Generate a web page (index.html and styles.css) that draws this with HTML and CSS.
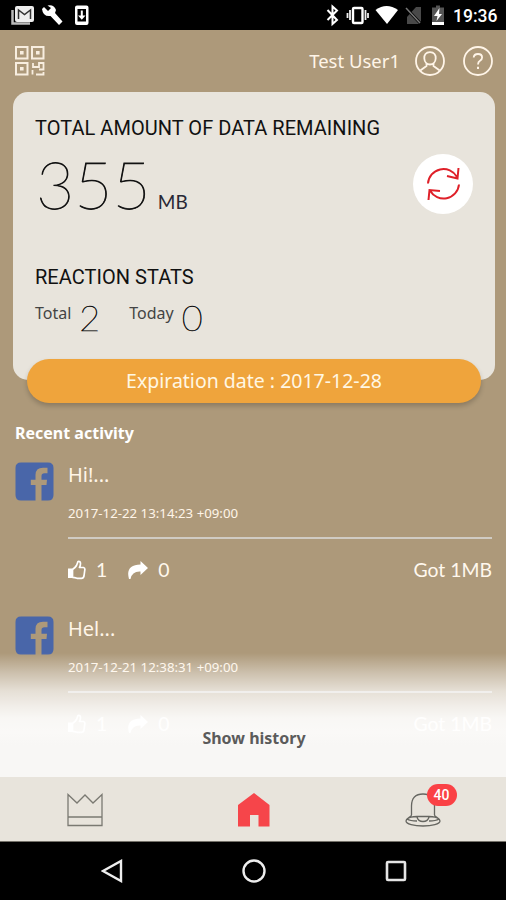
FILE: index.html
```html
<!DOCTYPE html>
<html lang="en">
<head>
<meta charset="utf-8">
<title>Data balance</title>
<link rel="stylesheet" href="styles.css">
</head>
<body>
<svg class="defs" width="0" height="0" aria-hidden="true">
  <symbol id="facebook" viewBox="0 0 39 39"><path fill="#4966a9" d="M6 .5H33Q38.500 .5 38.500 6V33Q38.500 38.500 33 38.500H26.500V23H31.500L32 17.800H26.500V14Q26.500 11.300 29.500 11.300H32.500V5.800H28Q20.500 5.800 20.500 13V17.800H15.800V23H20.500V38.500H6Q.5 38.500 .5 33V6Q.5 .5 6 .5Z"/></symbol>
  <symbol id="thumb" viewBox="0 0 18 20"><path fill="#fff" d="M0 8.500H4.500V18H0Z"/><path fill="none" stroke="#fff" stroke-width="1.700" stroke-linejoin="round" d="M4.500 9.500Q7.500 7.500 8.500 5.500Q9.500 3 10 1.500Q12.500 1 12.500 3.500Q12.500 5.500 11.500 7.500H15.500Q17.200 8 16.800 10L16 16Q15.500 18.300 13.500 18.300H9Q6.500 17.500 4.500 17.300Z"/></symbol>
  <symbol id="share" viewBox="0 0 20 19"><path fill="#fff" d="M12.500 0L20 7L12.500 14V10.500Q4 10 2.500 18H1Q-3 4 12.500 3.500Z"/></symbol>
</svg>
<main class="screen">
  <header class="status">
    <svg width="90" height="30" viewBox="0 0 90 30">
      <path d="M12.500 10V23.500H30" fill="none" stroke="#bbb" stroke-width="2.500"/><rect x="15" y="6" width="19" height="16" rx="2" fill="#eee"/><path d="M18.500 19V10L24.500 14.500L30.500 10V19" fill="none" stroke="#333" stroke-width="1.500"/>
      <path fill="#fff" d="M44 7L48 11L51 8L47.500 5.500Q54 4 56 10L55 13L62.500 21.500L59 25L50.500 16Q43 17 42 9Z"/>
      <path fill="#fff" fill-rule="evenodd" d="M77 5.500H86.500Q88.500 5.500 88.500 7.500V23Q88.500 25 86.500 25H77Q75 25 75 23V7.500Q75 5.500 77 5.500ZM77.500 9V21.500H86V9Z"/><path fill="#fff" d="M80.800 10.500H82.800V15.500H85.500L81.800 19.800L78 15.500H80.800Z"/>
    </svg>
    <div class="status-right">
      <svg width="121" height="30" viewBox="325 0 121 30">
        <path d="M327.500 10L337 20L332.500 24V6.500L337 10.500L327.500 20" fill="none" stroke="#fff" stroke-width="2"/>
        <rect x="353" y="8" width="9.500" height="15" rx="1" fill="none" stroke="#fff" stroke-width="2.400"/><path d="M350 10V20M347.500 13V18M365.500 10V20M368 13V18" stroke="#eee" stroke-width="1.800"/>
        <path fill="#fff" d="M375.500 10Q386.500 2 398 10L387 24Z"/>
        <path fill="#494949" d="M421 7V24H407V17L416 7Z"/><path d="M405 7L421 24" stroke="#000" stroke-width="3"/><path d="M406 8L420 23" stroke="#777" stroke-width="1.500"/>
        <path fill="#555" d="M436 5.500H440V7.500H444V25H432V7.500H436Z"/><path fill="#fff" d="M439.500 8L434 16H437.500L436.500 21L442 14H439ZM432 22H444V25H432Z"/>
      </svg>
      <time class="clock">19:36</time>
    </div>
  </header>

  <header class="topbar">
    <svg width="32" height="32" viewBox="0 0 32 32" fill="none" stroke="#f8eee0" stroke-width="2">
      <rect x="2" y="2" width="11.500" height="11.500"/><rect x="18" y="2" width="11.500" height="11.500"/><rect x="2" y="18" width="11.500" height="11.500"/>
      <path fill="#f8eee0" stroke="none" d="M6 6h3.600v3.600H6zM22 6h3.600v3.600H22zM6 22h3.600v3.600H6z"/>
      <path d="M19 18V22H25V18H29.500V24.500H25M18.500 25V29.500M22 29.500H29.500V27" stroke-width="1.800"/>
    </svg>
    <div class="account">
      <span class="user">Test User1</span>
      <svg class="avatar" width="30" height="30" viewBox="0 0 30 30" fill="none" stroke="#fff5e8" stroke-width="1.800"><circle cx="15" cy="15" r="14"/><path d="M15 6.200C10.800 6.200 9 9 9.300 12.500C9.500 16 12 18.500 15 18.500S20.500 16 20.700 12.500C21 9 19.200 6.200 15 6.200ZM11.500 17.500V20L5.300 24.500M18.500 17.500V20L24.700 24.500"/></svg>
      <svg width="30" height="30" viewBox="0 0 30 30" fill="none" stroke="#fff5e8" stroke-width="1.800"><circle cx="15" cy="15" r="14"/><path d="M10.700 11.500Q10.900 8 15 8Q19.100 8 19.100 11.500Q19.100 13.500 17 14.700Q15 15.800 15 18.500"/><path d="M15 20.800V23" stroke-width="2"/></svg>
    </div>
  </header>

  <section class="card">
    <h1 class="heading">TOTAL AMOUNT OF DATA REMAINING</h1>
    <div class="balance">
      <div class="amount"><span class="number">355</span><span class="unit">MB</span></div>
      <button class="refresh" aria-label="Refresh"><svg width="36" height="36" viewBox="0 0 36 36" fill="none" stroke="#df2029" stroke-width="2"><path d="M3 17.500A15.500 15.500 0 0 1 32 11M34 18.500A15.500 15.500 0 0 1 5 24.500M33.500 2L32.500 12.500L22 10M3.500 34L4.500 24L15 25"/></svg></button>
    </div>
    <h2 class="heading">REACTION STATS</h2>
    <div class="stats">
      <div class="stat total"><span class="label">Total</span><span class="value">2</span></div>
      <div class="stat"><span class="label">Today</span><span class="value">0</span></div>
    </div>
  </section>
  <div class="expiry"><span>Expiration date : 2017-12-28</span></div>

  <section class="activity">
    <h3 class="recent">Recent activity</h3>
    <article class="item">
      <svg width="39" height="39"><use href="#facebook"/></svg>
      <div class="detail">
        <p class="message">Hi!...</p>
        <p class="date">2017-12-22 13:14:23 +09:00</p>
        <div class="reactions"><svg width="18" height="20"><use href="#thumb"/></svg><span class="likes">1</span><svg width="20" height="19"><use href="#share"/></svg><span class="shares">0</span><span class="got">Got 1MB</span></div>
      </div>
    </article>
    <article class="item">
      <svg width="39" height="39"><use href="#facebook"/></svg>
      <div class="detail">
        <p class="message">Hel...</p>
        <p class="date">2017-12-21 12:38:31 +09:00</p>
        <div class="reactions"><svg width="18" height="20"><use href="#thumb"/></svg><span class="likes">1</span><svg width="20" height="19"><use href="#share"/></svg><span class="shares">0</span><span class="got">Got 1MB</span></div>
      </div>
    </article>
    <div class="fade"><span class="history">Show history</span></div>
  </section>

  <nav class="tabs">
    <svg width="36" height="34" viewBox="0 0 36 34" fill="none" stroke="#7a7972" stroke-width="1.300"><path d="M1 1.500L10 10L18 2L26 10L35 1.500V32.500H1ZM1 24H35"/></svg>
    <svg width="32" height="34" viewBox="0 0 32 34"><path fill="#f6454a" d="M16 0L31.500 12V33.500H20.500V22H12V33.500H0V12Z"/></svg>
    <div class="bell">
      <svg width="36" height="34" viewBox="0 0 36 34" fill="none" stroke="#666661" stroke-width="1.300"><path d="M6.500 22V13C6.500 5 10.500 1 18 1S29.500 5 29.500 13V22C29.500 24 35 25 35 28C35 31 27 33 18 33S1 31 1 28C1 25 6.500 24 6.500 22ZM2 26Q5 23.500 12 23.500H24Q31 23.500 34 26M2 26Q5 28 12 28M34 26Q31 28 24 28M12 24Q13 28.500 18 28.500T24 24"/></svg>
      <span class="badge">40</span>
    </div>
  </nav>
  <footer class="system">
    <svg width="22" height="24" viewBox="0 0 22 24" fill="none" stroke="#eee" stroke-width="2.400"><path d="M20 2V22L2 12Z"/></svg>
    <svg width="24" height="24" viewBox="0 0 24 24" fill="none" stroke="#eee" stroke-width="2.400"><circle cx="12" cy="12" r="10.500"/></svg>
    <svg width="22" height="22" viewBox="0 0 22 22" fill="none" stroke="#e5e5e5" stroke-width="2.600"><rect x="2" y="2" width="18" height="18" rx="1"/></svg>
  </footer>
</main>
</body>
</html>
```

FILE: styles.css
```css
* { box-sizing: border-box; }
body, h1, h2, h3, p { margin: 0; }
body { font-family: "Noto Sans", sans-serif; }
svg { display: block; flex: none; }
.defs { position: absolute; }
.screen { width: 506px; height: 900px; display: flex; flex-direction: column; background: #ad997a; overflow: hidden; color: #fff; }
.status { height: 30px; flex: none; background: #000; display: flex; justify-content: space-between; }
.status-right { display: flex; padding-right: 9px; gap: 7px; }
.clock { font: 500 17.500px/32px Roboto, sans-serif; white-space: nowrap; width: 44px; }
.topbar { height: 62px; flex: none; display: flex; justify-content: space-between; align-items: flex-start; padding: 15px 13px 0 14px; }
.account { display: flex; align-items: center; height: 32px; color: #fff5e8; }
.user { font-size: 18.500px; line-height: 32px; margin-right: 15px; white-space: nowrap; }
.avatar { margin-right: 18px; }
.card { height: 288px; flex: none; margin: 0 11px 0 13px; padding: 22px 22px 0; border-radius: 15px; background: #e8e4dc; color: #111; }
.heading { font: 400 20px/28px Roboto, sans-serif; letter-spacing: 0.04px; white-space: nowrap; }
.balance { height: 121px; display: flex; justify-content: space-between; align-items: flex-start; }
.amount { display: flex; align-items: baseline; font-family: Lato, sans-serif; }
.number { font-size: 66px; font-weight: 200; line-height: 84px; -webkit-text-stroke: 0.8px #111; margin-left: 1px; }
.unit { font-size: 19px; margin-left: 7px; font-weight: 400; color: #292835; }
.refresh { width: 60px; height: 60px; border: 0; padding: 0; border-radius: 50%; background: #fff; display: grid; place-items: center; margin-top: 12px; }
.stats { display: flex; align-items: flex-start; }
.stat { display: flex; gap: 8px; }
.total { margin-right: 29px; }
.label { font-size: 16px; line-height: 20px; margin-top: 12px; color: #444; }
.value { font: 200 36px/40px Lato, sans-serif; margin-top: 6px; -webkit-text-stroke: 0.6px #111; }
.expiry { flex: none; height: 44px; width: 454px; margin: -21px 0 0 27px; padding-bottom: 1px; border-radius: 22px; background: #efa43c; box-shadow: 0 3px 5px #0003; display: flex; align-items: center; justify-content: center; font-size: 19.500px; color: #fff7e3; z-index: 1; white-space: nowrap; }
.activity { height: 374px; flex: none; position: relative; overflow: hidden; padding: 18px 14px 0 15px; }
.recent { font-size: 16px; line-height: 24px; margin-bottom: 17px; }
.item { display: flex; gap: 14px; height: 154px; }
.detail { flex: 1; }
.message { font-size: 20px; line-height: 26px; color: #fff5e8; }
.date { font-size: 13.250px; line-height: 20px; margin-top: 15px; color: #fff5e8; white-space: nowrap; }
.reactions { border-top: 2px solid #d0cbc3; margin-top: 14px; padding-top: 20px; display: flex; align-items: center; font: 400 19.400px/22px Lato, sans-serif; color: #fff8ee; }
.likes { margin: 0 21px 0 10px; }
.shares { margin-left: 10px; }
.got { margin-left: auto; }
.fade { position: absolute; inset: 247px 0 0; padding-top: 76px; background: linear-gradient(#fff0 3px, #ffffff63 23px, #ffffffb0 41px, #ffffffd6 57px, #ffffffeb 68px, #fffffff0 82px, #f8f7f5 95px); display: flex; justify-content: center; align-items: flex-start; }
.history { font-size: 16px; line-height: 24px; font-weight: 700; color: #5b5b5b; padding-left: 2px; }
.tabs { height: 65px; flex: none; background: #e8e4dc; border-bottom: 1px solid #747169; display: grid; grid-template-columns: 169px 170px 167px; justify-items: center; align-items: center; padding-top: 2px; }
.bell { position: relative; }
.badge { position: absolute; left: 22px; top: -9px; width: 30px; height: 22px; border-radius: 11px; background: #fa4145; font: 500 14px/22px Roboto, sans-serif; text-align: center; }
.system { height: 58px; background: #000; display: grid; grid-template-columns: 142px 142px 142px; justify-items: center; align-items: center; padding-left: 41px; }
```
